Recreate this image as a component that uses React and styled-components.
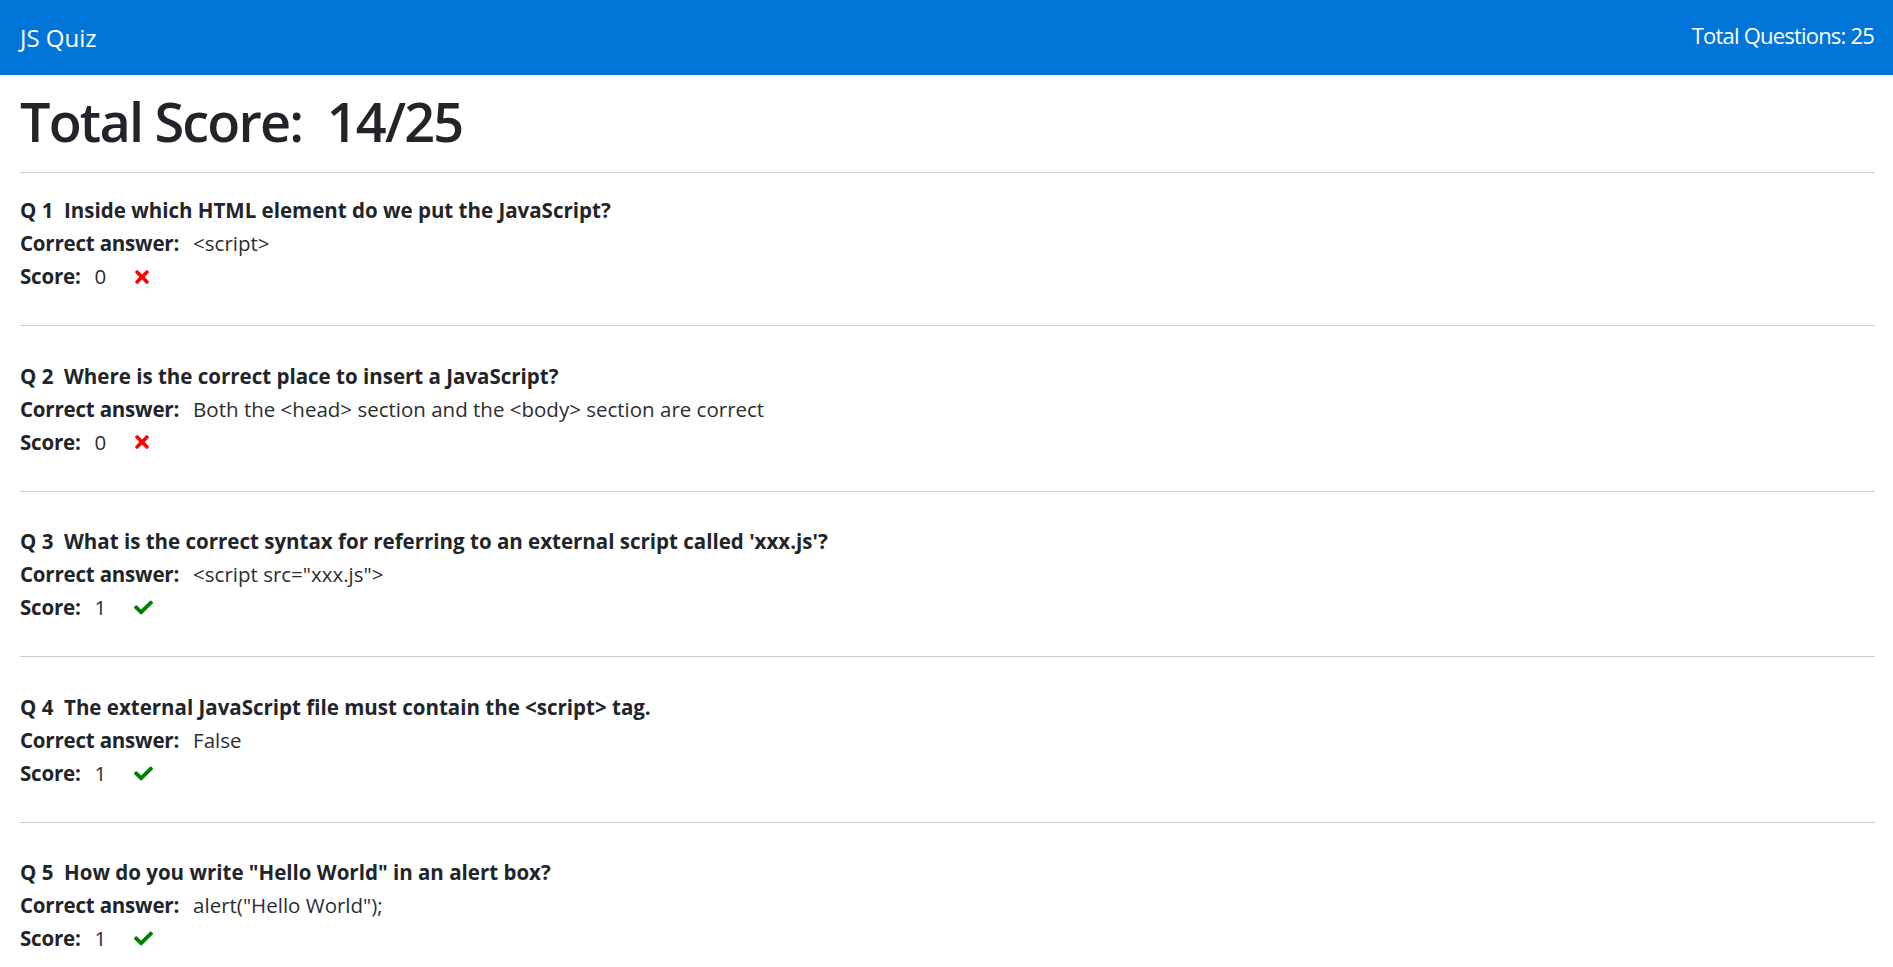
import React from "react";
import styled, { createGlobalStyle } from "styled-components";
import { FaTimes, FaCheck } from "react-icons/fa";

const GlobalStyle = createGlobalStyle`
  body {
    margin: 0;
    background: #fff;
    color: #212529;
    font-family: "Open Sans", "Noto Sans", sans-serif;
  }
`;

const NavBar = styled.nav`
  height: 75px;
  background: #0275d8;
  color: #fff;
  display: flex;
  align-items: center;
  justify-content: space-between;
  padding: 0 19px 0 20px;
`;

const Brand = styled.span`
  font-size: 24px;
  line-height: 1;
`;

const NavInfo = styled.span`
  font-size: 22px;
  letter-spacing: -0.8px;
  line-height: 1;
  margin-bottom: 6px;
`;

const Container = styled.main`
  padding: 0 18px 0 20px;
`;

const Heading = styled.h1`
  font-size: 54px;
  font-weight: 600;
  letter-spacing: -1.8px;
  line-height: 68px;
  margin: 12px 0 17px;
`;

const Divider = styled.hr`
  border: 0;
  border-top: 1px solid #ccc;
  margin: 0 0 21px;
`;

const QuestionList = styled.div`
  display: flex;
  flex-direction: column;
  gap: 33.5px;
`;

const QuestionCard = styled.section`
  padding-bottom: 32px;
  border-bottom: 1px solid #ccc;
`;

const Line = styled.div`
  font-size: 20.5px;
  line-height: 33px;
  display: flex;
  align-items: center;
  white-space: pre;
`;

const Title = styled(Line)`
  font-weight: 700;
`;

const Label = styled.span`
  font-weight: 700;
  letter-spacing: -0.2px;
`;

const Value = styled.span`
  font-weight: 400;
  color: #2b2e31;
  margin-left: 14px;
`;

const Mark = styled.span`
  display: inline-flex;
  margin-left: ${(props) => (props.$ok ? "28px" : "26px")};
  color: ${(props) => (props.$ok ? "#008000" : "#ff0000")};
`;

const questions = [
  {
    q: "Inside which HTML element do we put the JavaScript?",
    a: "<script>",
    score: 0,
  },
  {
    q: "Where is the correct place to insert a JavaScript?",
    a: "Both the <head> section and the <body> section are correct",
    score: 0,
  },
  {
    q: "What is the correct syntax for referring to an external script called 'xxx.js'?",
    a: '<script src="xxx.js">',
    score: 1,
  },
  {
    q: "The external JavaScript file must contain the <script> tag.",
    a: "False",
    score: 1,
  },
  {
    q: 'How do you write "Hello World" in an alert box?',
    a: 'alert("Hello World");',
    score: 1,
  },
];

const Question = ({ index, q, a, score }) => (
  <QuestionCard>
    <Title>{`Q ${index}  ${q}`}</Title>
    <Line>
      <Label>Correct answer:</Label>
      <Value>{a}</Value>
    </Line>
    <Line>
      <Label>Score:</Label>
      <Value>{score}</Value>
      <Mark $ok={score > 0}>
        {score > 0 ? <FaCheck size={19} /> : <FaTimes size={20} />}
      </Mark>
    </Line>
  </QuestionCard>
);

export default function App() {
  return (
    <>
      <GlobalStyle />
      <NavBar>
        <Brand>JS Quiz</Brand>
        <NavInfo>Total Questions: 25</NavInfo>
      </NavBar>
      <Container>
        <Heading>Total Score:&nbsp;&nbsp;14/25</Heading>
        <Divider />
        <QuestionList>
          {questions.map((item, i) => (
            <Question key={i} index={i + 1} {...item} />
          ))}
        </QuestionList>
      </Container>
    </>
  );
}
